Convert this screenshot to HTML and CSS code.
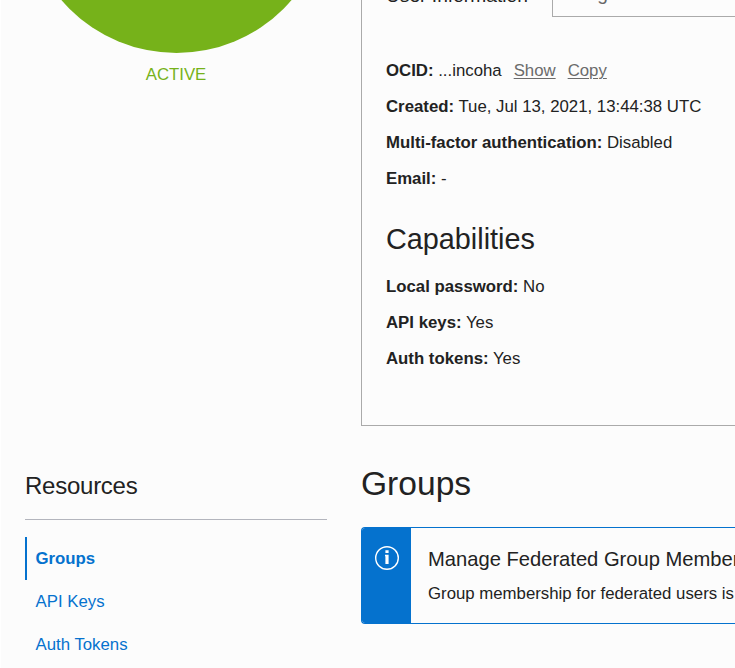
FILE: index.html
```html
<!DOCTYPE html>
<html lang="en">
<head>
<meta charset="utf-8">
<title>User Details</title>
<link rel="stylesheet" href="styles.css">
</head>
<body>
<div class="page">
  <aside class="status">
    <div class="status-disc"></div>
    <div class="status-label">ACTIVE</div>
  </aside>
  <section class="panel">
    <nav class="tabs">
      <div class="tab tab-active"><span>User Information</span></div>
      <div class="tab tab-idle"><span>Tags</span></div>
    </nav>
    <div class="details">
      <p><b>OCID:</b> ...incoha<a class="action">Show</a><a class="action">Copy</a></p>
      <p><b>Created:</b> Tue, Jul 13, 2021, 13:44:38 UTC</p>
      <p><b>Multi-factor authentication:</b> Disabled</p>
      <p><b>Email:</b> -</p>
      <h2>Capabilities</h2>
      <p><b>Local password:</b> No</p>
      <p><b>API keys:</b> Yes</p>
      <p><b>Auth tokens:</b> Yes</p>
    </div>
  </section>
  <aside class="resources">
    <h3>Resources</h3>
    <ul>
      <li class="current">Groups</li>
      <li>API Keys</li>
      <li>Auth Tokens</li>
    </ul>
  </aside>
  <main class="groups">
    <h1>Groups</h1>
    <div class="notice">
      <div class="notice-icon">
        <svg width="24" height="24" viewBox="0 0 24 24">
          <circle cx="12" cy="12" r="11.3" fill="none" stroke="#fff" stroke-width="1.4"/>
          <path d="M10.4 4.2h3.2v2.8h-3.2zM10 8.8h3.6v9.2h-3.2v-7.8H10z" fill="#fff"/>
        </svg>
      </div>
      <div class="notice-body">
        <h4>Manage Federated Group Member</h4>
        <p>Group membership for federated users is</p>
      </div>
    </div>
  </main>
</div>
</body>
</html>
```

FILE: styles.css
```css
* { box-sizing: border-box; margin: 0; padding: 0; }
body {
  width: 735px;
  height: 668px;
  overflow: hidden;
  background: #fcfcfc;
  border-left: 1px solid #fff;
  color: #222;
  font: 16.8px/24px "Liberation Sans", Arial, sans-serif;
}
.page {
  display: grid;
  grid-template-columns: 302px 1fr;
  grid-template-rows: 426px 242px;
  column-gap: 34px;
  padding-left: 24px;
  height: 668px;
}
.status { display: flex; flex-direction: column; overflow: hidden; text-align: center; color: #76b21a; }
.status-disc {
  flex: none;
  width: 303px;
  height: 303px;
  margin-top: -250px;
  border-radius: 50%;
  background: #76b21a;
}
.status-label { margin-top: 10px; }
.panel { min-width: 0; border-left: 1px solid #aaa; border-bottom: 1px solid #aaa; }
.tabs { display: flex; height: 17px; white-space: nowrap; }
.tab { height: 17px; padding-left: 24px; font-size: 19.2px; line-height: 24px; }
.tab span { display: block; margin-top: -18px; }
.tab-active { width: 190px; }
.tab-active span { margin-top: -16px; }
.tab-idle { flex: 1; border-left: 1px solid #aaa; border-bottom: 1px solid #aaa; color: #666; }
.details { padding: 42px 0 0 24px; white-space: nowrap; }
.details p { height: 24px; margin-bottom: 12px; }
.details h2 { margin: 30px 0 18px; font-size: 28.8px; line-height: 36px; font-weight: normal; }
.action { margin-left: 12px; color: #6b6b6b; text-decoration: underline; text-underline-offset: 2px; text-decoration-thickness: 1px; }
.resources { padding-top: 42px; }
.resources h3 { height: 52px; border-bottom: 1px solid #b3b5bd; font-size: 24px; line-height: 36px; font-weight: normal; letter-spacing: -0.25px; }
.resources ul { list-style: none; margin-top: 17px; color: #0572ce; }
.resources li { height: 43px; line-height: 43px; padding-left: 10.5px; }
.resources .current { border-left: 2px solid #0572ce; padding-left: 8.5px; font-weight: bold; }
.groups { min-width: 0; padding-top: 37px; }
.groups h1 { font-size: 33.6px; line-height: 42px; font-weight: normal; }
.notice {
  display: flex;
  height: 97px;
  margin-top: 22px;
  border: 1px solid #0572ce;
  border-right: 0;
  border-radius: 4px 0 0 4px;
  overflow: hidden;
  white-space: nowrap;
}
.notice-icon { flex: 0 0 49px; padding: 18px 0 0 13px; background: #0572ce; }
.notice-icon svg { display: block; }
.notice-body { padding: 18px 0 0 17px; }
.notice h4 { font-size: 20.16px; line-height: 26px; font-weight: normal; }
.notice p { margin-top: 10px; }
```
